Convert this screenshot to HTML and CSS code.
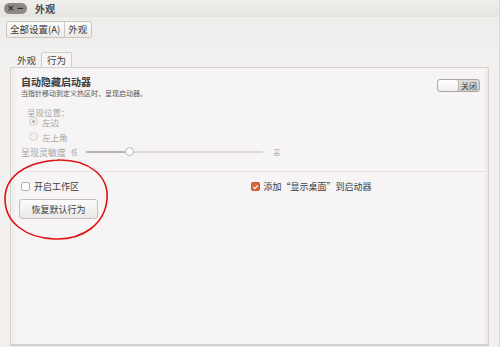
FILE: index.html
```html
<!DOCTYPE html>
<html lang="zh">
<head>
<meta charset="utf-8">
<link rel="stylesheet" href="styles.css">
</head>
<body>
<div class="window">
  <div class="titlebar">
    <div class="controls"><span class="ctl">×</span><span class="ctl">−</span></div>
    <div class="title">外观</div>
  </div>
  <div class="toolbar">
    <div class="crumbs"><span class="crumb">全部设置(A)</span><span class="crumb">外观</span></div>
  </div>
  <div class="body">
    <div class="tabs">
      <span class="tab">外观</span><span class="tab active">行为</span>
    </div>
    <div class="panel">
      <div class="section">
        <div class="row-head">
          <div>
            <div class="heading">自动隐藏启动器</div>
            <div class="sub">当指针移动到定义热区时，呈现启动器。</div>
          </div>
          <div class="switch"><span class="knob"></span><span class="state">关闭</span></div>
        </div>
        <div class="dim">
          <div class="label-pos">呈现位置：</div>
          <div class="radio first"><span class="rb on"></span>左边</div>
          <div class="radio"><span class="rb"></span>左上角</div>
          <div class="sens">
            <span>呈现灵敏度</span><span class="tiny">低</span>
            <div class="slider"><div class="fill"></div><div class="thumb"></div></div>
            <span class="tiny">高</span>
          </div>
        </div>
      </div>
      <div class="sep"></div>
      <div class="lower">
        <div class="col">
          <div class="check"><span class="cb"></span>开启工作区</div>
          <button class="btn">恢复默认行为</button>
        </div>
        <div class="col right">
          <div class="check"><span class="cb checked"><svg viewBox="0 0 10 10" width="8" height="8"><path d="M1.8 5.2 L4 7.4 L8.3 2.6" fill="none" stroke="#fff" stroke-width="1.8"/></svg></span>添加“显示桌面”到启动器</div>
        </div>
      </div>
    </div>
    <svg class="ellipse" width="120" height="90" viewBox="0 0 120 90"><path d="M60 5 C92 4 112 21 110 44 C108 69 86 85 58 84 C28 83 8 67 8 44 C8 23 26 7 62 5" fill="none" stroke="#e01010" stroke-width="1.6"/></svg>
  </div>
</div>
</body>
</html>
```
FILE: styles.css
```css
* { box-sizing: border-box; }
html, body { margin: 0; padding: 0; }
body {
  width: 500px; height: 347px; overflow: hidden;
  font-family: "Noto Sans CJK SC", "Noto Sans", sans-serif;
  color: #3c3c3c;
  background: #f2f1f0;
}
.window { width: 500px; height: 347px; display: flex; flex-direction: column; border-right: 1px solid #dcdad6; }
.titlebar {
  height: 17px; display: flex; align-items: center; gap: 8px; padding-left: 4px;
  background: linear-gradient(#f0efec, #e6e4e0);
}
.controls {
  width: 23px; height: 11px; border-radius: 6px; background: #8d8a85;
  display: flex; align-items: center; justify-content: space-around; padding: 0 2px;
}
.ctl { color: #2e2e2e; font-size: 9px; line-height: 9px; font-family: "DejaVu Sans", sans-serif; font-weight: bold; }
.title { font-size: 10px; font-weight: bold; color: #4a4844; }
.toolbar { height: 30px; padding: 4px 0 0 6px; background: #efeeec; display: flex; align-items: flex-start; }
.crumbs { display: flex; border: 1px solid #c9c6c1; border-radius: 2px; background: linear-gradient(#fbfbfa, #eceae7); height: 17px; }
.crumb { font-size: 9.5px; line-height: 15px; padding: 0 4px 0 3px; color: #3c3c3c; }
.crumb + .crumb { border-left: 1px solid #cdcac5; }
.body { flex: 1; position: relative; padding: 5px 10px 2px 10px; display: flex; flex-direction: column; }
.tabs { display: flex; padding-left: 2px; height: 15px; align-items: flex-end; }
.tab { font-size: 9.5px; line-height: 13px; padding: 0 5px; color: #3c3c3c; }
.active { background: #f6f5f4; border: 1px solid #d2cfcb; border-bottom: none; line-height: 14px; border-radius: 2px 2px 0 0; }
.panel {
  flex: 1; background: #f6f4f4; border: 1px solid #d6d3cf;
  box-shadow: inset 4px 0 0 #f1efed, inset -3px 0 0 #eeece9, 0 1px 0 #cfccc8;
  padding: 8px 10px 0 10px;
}
.row-head { display: flex; justify-content: space-between; align-items: flex-start; }
.heading { font-size: 10px; font-weight: bold; line-height: 12px; color: #3c3c3c; }
.sub { font-size: 7px; line-height: 10px; color: #555; }
.switch {
  margin-top: 3px; margin-right: -2px; width: 43px; height: 13px; display: flex;
  border: 1px solid #aaa7a2; border-radius: 3px; overflow: hidden; background: linear-gradient(#dedcd8, #cfccc8);
}
.knob { width: 21px; background: linear-gradient(#ffffff, #f0efed); border-right: 1px solid #b6b3ae; border-radius: 3px; }
.state { flex: 1; font-size: 8px; line-height: 11px; text-align: center; color: #444; }
.dim { color: #a9a6a2; }
.label-pos { font-size: 8.5px; line-height: 10px; margin: 9px 0 0 6px; }
.radio { display: flex; align-items: center; gap: 4px; font-size: 8.5px; line-height: 10px; height: 15px; margin-left: 8px; }
.radio.first { margin-top: -3px; }
.rb { width: 9px; height: 9px; border: 1px solid #d4d1cd; border-radius: 50%; background: #f2f0ee; display: inline-flex; align-items: center; justify-content: center; }
.rb.on::after { content: ""; width: 3px; height: 3px; border-radius: 50%; background: #b3b0ab; }
.sens { display: flex; align-items: center; font-size: 9px; line-height: 11px; margin-top: 1px; height: 14px; }
.tiny { font-size: 6.5px; margin-left: 5px; }
.slider { position: relative; width: 177px; height: 2px; background: #dddad6; margin: 0 6px 0 8px; }
.fill { width: 44px; height: 2px; background: #b8b5b0; }
.thumb { position: absolute; left: 39px; top: -4px; width: 9px; height: 9px; border-radius: 50%; border: 1px solid #bdbab5; background: #fbfbfa; }
.sep { height: 1px; background: #e5e2df; margin: 12px -7px 0 -6px; }
.lower { display: flex; padding-top: 9px; }
.col { width: 231px; display: flex; flex-direction: column; align-items: flex-start; }
.check { display: flex; align-items: center; gap: 4px; font-size: 9px; line-height: 11px; color: #3c3c3c; }
.cb { width: 9px; height: 9px; border: 1px solid #b4b1ac; border-radius: 2px; background: #fff; display: inline-flex; align-items: center; justify-content: center; }
.cb.checked { background: #d9663a; border-color: #c55a30; }
.btn {
  margin-top: 7px; margin-left: -2px; width: 79px; height: 20px; font-family: inherit; font-size: 9px; color: #3c3c3c;
  border: 1px solid #c3c0bb; border-radius: 3px; background: linear-gradient(#fcfbfb, #ebe9e6); padding: 0;
}
.right { padding-left: 1px; }
.ellipse { position: absolute; left: -3px; top: 108px; }
```
